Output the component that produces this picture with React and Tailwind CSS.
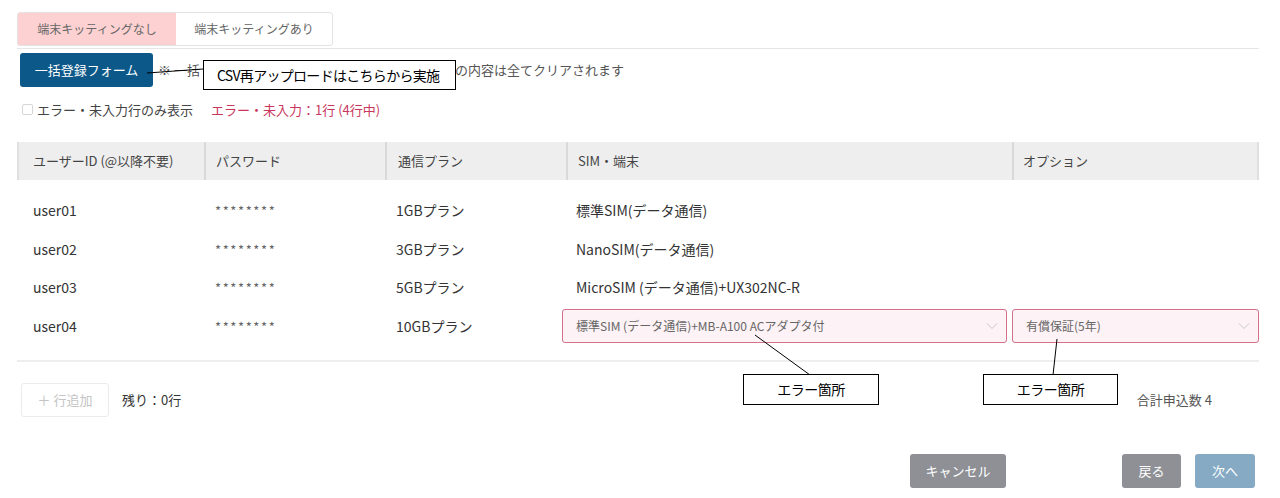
import React from "react";

const rows = [
  { id: "user01", plan: "1GBプラン", sim: "標準SIM(データ通信)" },
  { id: "user02", plan: "3GBプラン", sim: "NanoSIM(データ通信)" },
  { id: "user03", plan: "5GBプラン", sim: "MicroSIM (データ通信)+UX302NC-R" },
];

function Chevron() {
  return (
    <svg width="12" height="8" viewBox="0 0 12 8" className="text-[#c8c8c8]">
      <path d="M1 1.5 L6 6.5 L11 1.5" fill="none" stroke="currentColor" strokeWidth="1" />
    </svg>
  );
}

export default function App() {
  const font = { fontFamily: '"Noto Sans CJK JP", "Noto Sans", sans-serif' };
  return (
    <div className="relative w-[1280px] h-[498px] bg-white text-[#333] overflow-hidden" style={font}>
      <div className="pl-[17px] pr-[21px] pt-[12px]">
        {/* tabs */}
        <div className="border-b border-[#e6e6e6] pb-[2px]">
          <div className="inline-flex h-[34px] border border-[#e3e3e3] rounded-[3px] text-[12px] text-[#666]">
            <div className="w-[158px] bg-[#fdd1d1] flex items-center justify-center">端末キッティングなし</div>
            <div className="w-[156px] flex items-center justify-center">端末キッティングあり</div>
          </div>
        </div>

        {/* bulk button row */}
        <div className="flex items-center mt-[4px] pl-[3px]">
          <div className="w-[133px] h-[34px] bg-[#0c5888] rounded-[3px] text-white text-[13px] flex items-center justify-center">
            一括登録フォーム
          </div>
          <div className="ml-[5px] text-[13px] text-[#555] whitespace-nowrap">※ 一括</div>
          <div className="ml-[255px] text-[13px] text-[#555] whitespace-nowrap">の内容は全てクリアされます</div>
        </div>

        {/* filter row */}
        <div className="flex items-center mt-[13px] pl-[5px] text-[13px]">
          <span className="w-[11px] h-[11px] border border-[#d6d6d6] rounded-[2px] bg-white"></span>
          <span className="ml-[4px] text-[#444]">エラー・未入力行のみ表示</span>
          <span className="ml-[18px] text-[#c9365c]">エラー・未入力：1行 (4行中)</span>
        </div>

        {/* table */}
        <div className="mt-[22px] w-[1242px]">
          <div className="grid grid-cols-[185px_181px_181px_446px_249px] h-[38px] bg-[#eeeeee] text-[13px] text-[#444] border-l-2 border-r-2 border-[#e0e0e0]">
            <div className="flex items-center pl-[14px]">ユーザーID (@以降不要)</div>
            <div className="flex items-center pl-[10px] border-l-2 border-[#d9d9d9]">パスワード</div>
            <div className="flex items-center pl-[11px] border-l-2 border-[#d9d9d9]">通信プラン</div>
            <div className="flex items-center pl-[10px] border-l-2 border-[#d9d9d9]">SIM・端末</div>
            <div className="flex items-center pl-[9px] border-l-2 border-[#d9d9d9]">オプション</div>
          </div>
          <div className="pt-[12px] pb-[14px] border-b-2 border-[#eeeeee] text-[14px] text-[#333]">
            {rows.map((r) => (
              <div key={r.id} className="grid grid-cols-[185px_181px_181px_446px_249px] h-[38.5px] items-center">
                <div className="pl-[16px]">{r.id}</div>
                <div className="pl-[13px] text-[#666] tracking-[1.6px] text-[13px]">********</div>
                <div className="pl-[13px]">{r.plan}</div>
                <div className="pl-[12px]">{r.sim}</div>
                <div></div>
              </div>
            ))}
            <div className="grid grid-cols-[185px_181px_181px_446px_249px] h-[38.5px] items-center">
              <div className="pl-[16px]">user04</div>
              <div className="pl-[13px] text-[#666] tracking-[1.6px] text-[13px]">********</div>
              <div className="pl-[13px]">10GBプラン</div>
              <div className="-ml-[2px] mr-[3px] h-[34px] border border-[#d3708b] rounded-[3px] bg-[#fdf2f5] flex items-center justify-between pl-[13px] pr-[8px] text-[12px] text-[#666]">
                <span>標準SIM (データ通信)+MB-A100 ACアダプタ付</span>
                <Chevron />
              </div>
              <div className="ml-[2px] h-[34px] border border-[#d3708b] rounded-[3px] bg-[#fdf2f5] flex items-center justify-between pl-[13px] pr-[8px] text-[12px] text-[#666]">
                <span>有償保証(5年)</span>
                <Chevron />
              </div>
            </div>
          </div>
        </div>

        {/* add row */}
        <div className="flex items-center mt-[21px] pl-[4px] pr-[2px]">
          <div className="w-[88px] h-[34px] border border-[#ebebeb] rounded-[3px] flex items-center justify-center text-[13px] text-[#c4c4c4]">
            ＋ 行追加
          </div>
          <div className="ml-[13px] text-[13px] text-[#333]">残り：0行</div>
          <div className="ml-auto mr-[45px] text-[13px] text-[#555]">合計申込数 4</div>
        </div>

        {/* bottom buttons */}
        <div className="flex items-center mt-[37px]">
          <div className="ml-[893px] w-[96px] h-[34px] bg-[#8e9096] rounded-[3px] text-white text-[13px] flex items-center justify-center">キャンセル</div>
          <div className="ml-[116px] w-[59px] h-[34px] bg-[#8e9096] rounded-[3px] text-white text-[13px] flex items-center justify-center">戻る</div>
          <div className="ml-[14px] w-[60px] h-[34px] bg-[#86aac4] rounded-[3px] text-white text-[13px] flex items-center justify-center">次へ</div>
        </div>
      </div>

      {/* annotation lines */}
      <svg className="absolute left-0 top-0 pointer-events-none" width="1280" height="498">
        <line x1="147" y1="73" x2="203" y2="69" stroke="#000" strokeWidth="1" />
        <line x1="755" y1="335" x2="810" y2="375" stroke="#000" strokeWidth="1" />
        <line x1="1057" y1="339" x2="1053" y2="375" stroke="#000" strokeWidth="1" />
      </svg>

      {/* annotation boxes */}
      <div className="absolute left-[203px] top-[60px] w-[253px] h-[30px] bg-white border border-black flex items-center pl-[13px] text-[14px] text-black tracking-[-0.7px] whitespace-nowrap">
        CSV再アップロードはこちらから実施
      </div>
      <div className="absolute left-[743px] top-[374px] w-[136px] h-[31px] bg-white border border-black flex items-center justify-center text-[14px] text-black tracking-[-0.5px]">
        エラー箇所
      </div>
      <div className="absolute left-[983px] top-[374px] w-[135px] h-[31px] bg-white border border-black flex items-center justify-center text-[14px] text-black tracking-[-0.5px]">
        エラー箇所
      </div>
    </div>
  );
}
